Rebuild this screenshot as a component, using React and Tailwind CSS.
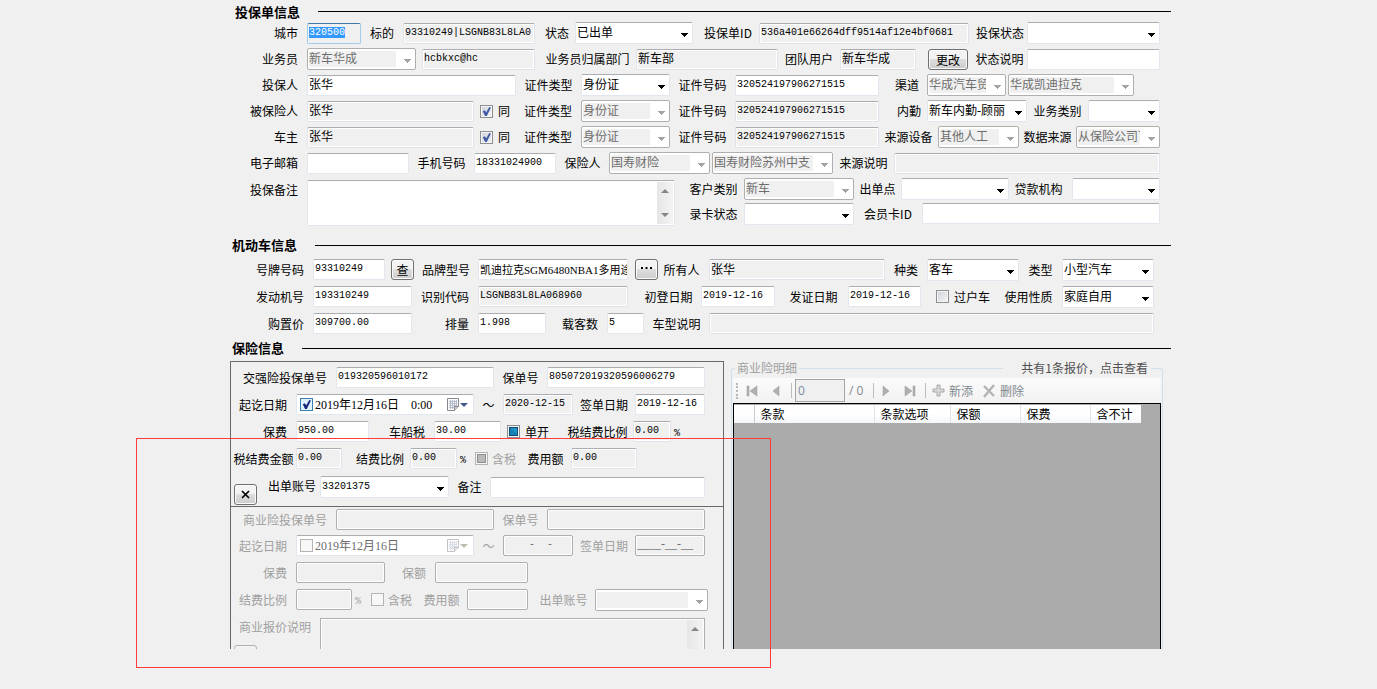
import { useEffect, useRef } from "react";

const MONO = "font-['Liberation_Mono','Noto_Sans_CJK_SC',monospace] text-[10px]";
const CJK = "font-['Liberation_Serif','Noto_Sans_CJK_SC',serif] text-[12px]";
const CJK_SMALL = "font-['Liberation_Serif','Noto_Sans_CJK_SC',serif] text-[11px]";

const BOX = {
  edit: "bg-white border-[#e2e6ee] border-t-[#abadb3] text-black",
  read: "bg-[#f0f0f0] border-[#dfe3eb] border-t-[#abadb3] text-black shadow-[inset_0_0_0_1px_#ffffff]",
  off: "bg-[#f0f0f0] border-[#afafaf] text-[#6d6d6d] shadow-[inset_0_0_0_1px_#ffffff]",
};

function Heading({ children, className = "h-[22px] pl-[2px]" }) {
  return (
    <div className={`flex items-center gap-[18px] ${className}`}>
      <h2 className="text-[13px] leading-4 font-bold whitespace-nowrap">{children}</h2>
      <div className="h-px flex-1 bg-black" />
    </div>
  );
}

function Row({ children, className = "h-[27px]" }) {
  return <div className={`flex items-center ${className}`}>{children}</div>;
}

function Label({ id, first, className = "", children }) {
  return (
    <label
      htmlFor={id}
      className={`flex-none whitespace-nowrap leading-4 ${first ? "pr-[9px] text-right" : "text-center"} ${className}`}
    >
      {children}
    </label>
  );
}

function Text({ id, value = "", kind = "edit", cjk, small, className = "", label }) {
  return (
    <input
      id={id}
      aria-label={label}
      type="text"
      defaultValue={value}
      readOnly={kind === "read"}
      disabled={kind === "off"}
      className={`block h-[21px] min-w-0 rounded-[2px] border pb-[2px] pl-px leading-4 outline-none ${BOX[kind]} ${small ? CJK_SMALL : cjk ? CJK : MONO} ${className}`}
    />
  );
}

function Arrow({ off, className = "" }) {
  return (
    <svg viewBox="0 0 8 4" className={`h-1 w-2 ${className}`} shapeRendering="crispEdges" aria-hidden="true">
      <path d="M0 0h8L4 4z" fill={off ? "#a3a3a3" : "#000000"} />
    </svg>
  );
}

function Select({ id, value = "", off, mono, className = "", label }) {
  return (
    <div
      className={`relative h-[22px] min-w-0 rounded-[2px] border bg-white py-[2px] pl-px pr-[19px] ${off ? "border-[#afafaf]" : "border-[#e2e6ee] border-t-[#abadb3]"} ${className}`}
    >
      <select
        id={id}
        aria-label={label}
        disabled={off}
        defaultValue={value}
        className={`block h-4 w-full appearance-none overflow-hidden text-clip leading-[14px] opacity-100 outline-none ${off ? "bg-[#f0f0f0] text-[#6d6d6d]" : "bg-white text-black"} ${mono ? MONO : CJK}`}
      >
        <option value={value}>{value}</option>
      </select>
      <Arrow off={off} className="pointer-events-none absolute right-1 top-[10px]" />
    </div>
  );
}

function Check({ id, state, off, label, className = "" }) {
  return (
    <span className={`relative block size-[13px] flex-none ${className}`}>
      <input
        id={id}
        type="checkbox"
        aria-label={label}
        disabled={off}
        defaultChecked={state === "on" || state === "blue"}
        className={`block size-[13px] appearance-none border ${state === "blue" ? "border-[#3c7fb1] bg-[#dff1fb]" : off ? "border-[#b4b4b4] bg-[#f7f7f7]" : "border-[#8e8f8f] bg-linear-to-br from-[#cdd1d8] to-[#f6f6f6] shadow-[inset_0_0_0_1px_#f4f4f4]"}`}
      />
      <svg viewBox="0 0 13 13" className="pointer-events-none absolute inset-0 size-[13px]" aria-hidden="true">
        {(state === "on" || state === "blue") && (
          <path d="M2.800 6.200 5 5.300 6.100 7.400 9.300 2 10.900 2.500 6.800 11H5.100z" fill={state === "blue" ? "#14227c" : "#3f5aa5"} />
        )}
        {state === "mixed" && (
          <>
            <rect x="2" y="2" width="9" height="9" fill="#0c4a78" />
            <path d="M3 3h7v7z" fill="#1f93c4" />
            <path d="M3 3v7h7z" fill="#1682b4" />
          </>
        )}
        {state === "grey" && (
          <>
            <rect x="2" y="2" width="9" height="9" fill="#8f8f8f" />
            <rect x="3" y="3" width="7" height="7" fill="#b9b9b9" />
          </>
        )}
      </svg>
    </span>
  );
}

function Button({ children, label, className = "" }) {
  return (
    <button
      type="button"
      aria-label={label}
      className={`h-[21px] flex-none rounded-[3px] border border-[#707070] bg-linear-to-b from-[#f3f3f3] from-45% via-[#dddddd] via-50% to-[#cdcdcd] text-center leading-[17px] shadow-[inset_0_0_0_1px_#fbfbfb] ${className}`}
    >
      {children}
    </button>
  );
}

function DateBox({ id, value, checked, off, label }) {
  return (
    <div
      className={`flex h-[21px] w-[178px] flex-none items-center rounded-[2px] border border-[#e2e6ee] border-t-[#abadb3] bg-white pl-[3px] pr-[5px] ${off ? "text-[#6d6d6d]" : "text-black"}`}
    >
      <Check id={`${id}-on`} state={checked ? "blue" : "none"} off={off} label={`${label}启用`} />
      <input
        id={id}
        type="text"
        disabled={off}
        defaultValue={value}
        className={`ml-[2px] h-[17px] min-w-0 flex-1 whitespace-pre bg-transparent outline-none ${CJK}`}
      />
      <svg viewBox="0 0 12 13" className={`h-[13px] w-3 ${off ? "opacity-50" : ""}`} aria-hidden="true">
        <path d="M.5.5h11v8l-4 4h-7z" fill="#fafafa" stroke="#8b8791" />
        <path d="M2 3.5h8M2 5.5h8M2 7.5h8M2 9.5h5M3.5 2v9M5.5 2v9M7.5 2v7M9.5 2v6" stroke="#a9b3c6" strokeWidth=".8" />
        <path d="M11.5 8.5h-4v4" fill="#d5d0cc" stroke="#8b8791" />
      </svg>
      <svg viewBox="0 0 8 4" className="ml-px h-1 w-2" aria-hidden="true">
        <path d="M0 0h8L4 4z" fill={off ? "#b9bcae" : "#43598c"} />
      </svg>
    </div>
  );
}

function ScrollBar({ className = "" }) {
  return (
    <div className={`flex w-4 flex-none flex-col items-center justify-between bg-linear-to-r from-[#e6e6e6] to-[#f3f3f3] py-[7px] ${className}`}>
      <svg viewBox="0 0 8 4" className="h-1 w-2" aria-hidden="true">
        <path d="M0 4h8L4 0z" fill="#858585" />
      </svg>
      <svg viewBox="0 0 8 4" className="h-1 w-2" aria-hidden="true">
        <path d="M0 0h8L4 4z" fill="#858585" />
      </svg>
    </div>
  );
}

function CityInput() {
  const ref = useRef(null);
  useEffect(() => {
    ref.current.focus();
    ref.current.select();
  }, []);
  return (
    <input
      id="city"
      ref={ref}
      type="text"
      defaultValue="320500"
      className={`block h-[21px] w-[54px] rounded-[2px] border border-[#a5cbe6] border-t-[#3d7bad] bg-[#f0f0f0] pb-[2px] pl-px outline-none selection:bg-[#3399ff] selection:text-white ${MONO}`}
    />
  );
}

function PolicySection() {
  return (
    <section>
      <Heading className="h-5 pl-[5px] pt-[3px]">投保单信息</Heading>
      <div className="pr-[11px]">
        <Row className="h-[26px]">
          <Label id="city" first className="w-[77px]">城市</Label>
          <CityInput />
          <Label id="target" className="w-[42px]">标的</Label>
          <Text id="target" kind="read" value="93310249|LSGNB83L8LA0" className="w-[132px]" />
          <Label id="state" className="w-10 pl-1">状态</Label>
          <Select id="state" value="已出单" className="w-[118px]" />
          <Label id="pid" className="w-[66px] pl-1">投保单ID</Label>
          <Text id="pid" kind="read" value="536a401e66264dff9514af12e4bf0681" className="w-[210px]" />
          <Label id="pstate" className="w-[58px] pl-1">投保状态</Label>
          <Select id="pstate" className="flex-1" />
        </Row>
        <Row className="h-[26px]">
          <Label id="agent" first className="w-[77px]">业务员</Label>
          <Select id="agent" value="新车华成" off className="mr-[6px] w-[109px]" />
          <Text label="业务员账号" kind="read" value="hcbkxc@hc" className="w-[113px]" />
          <Label id="dept" className="w-[101px] pl-1">业务员归属部门</Label>
          <Text id="dept" kind="read" cjk value="新车部" className="w-[142px]" />
          <Label id="team" className="w-[62px]">团队用户</Label>
          <Text id="team" kind="read" cjk value="新车华成" className="w-[76px]" />
          <Button className="ml-3 w-10">更改</Button>
          <Label id="snote" className="w-[59px] pl-1">状态说明</Label>
          <Text id="snote" className="flex-1" />
        </Row>
        <Row className="h-[26px]">
          <Label id="applicant" first className="w-[77px]">投保人</Label>
          <Text id="applicant" cjk value="张华" className="w-[209px]" />
          <Label id="ct1" className="w-[65px]">证件类型</Label>
          <Select id="ct1" value="身份证" className="w-[89px]" />
          <Label id="cn1" className="w-[65px]">证件号码</Label>
          <Text id="cn1" value="320524197906271515" className="w-[144px]" />
          <Label id="channel" className="w-12 pl-2">渠道</Label>
          <Select id="channel" value="华成汽车贸易" off className="mr-[2px] w-[79px]" />
          <Select label="渠道明细" value="华成凯迪拉克" off className="w-[126px]" />
        </Row>
        <Row className="h-[26px]">
          <Label id="insured" first className="w-[77px]">被保险人</Label>
          <Text id="insured" kind="read" cjk value="张华" className="w-[167px]" />
          <Check id="same1" state="on" className="ml-[6px]" />
          <Label id="same1" className="w-[22px]">同</Label>
          <Label id="ct2" className="w-[66px]">证件类型</Label>
          <Select id="ct2" value="身份证" off className="w-[89px]" />
          <Label id="cn2" className="w-[65px]">证件号码</Label>
          <Text id="cn2" kind="read" value="320524197906271515" className="w-[144px]" />
          <Label id="clerk" className="w-12 pl-3">内勤</Label>
          <Select id="clerk" value="新车内勤-顾丽" className="w-[100px]" />
          <Label id="biz" className="w-[61px]">业务类别</Label>
          <Select id="biz" className="flex-1" />
        </Row>
        <Row className="h-[26px]">
          <Label id="owner" first className="w-[77px]">车主</Label>
          <Text id="owner" kind="read" cjk value="张华" className="w-[167px]" />
          <Check id="same2" state="on" className="ml-[6px]" />
          <Label id="same2" className="w-[22px]">同</Label>
          <Label id="ct3" className="w-[66px]">证件类型</Label>
          <Select id="ct3" value="身份证" off className="w-[89px]" />
          <Label id="cn3" className="w-[65px]">证件号码</Label>
          <Text id="cn3" kind="read" value="320524197906271515" className="w-[144px]" />
          <Label id="device" className="w-[59px]">来源设备</Label>
          <Select id="device" value="其他人工" off className="w-[81px]" />
          <Label id="data" className="w-[57px]">数据来源</Label>
          <Select id="data" value="从保险公司下载" off className="flex-1" />
        </Row>
        <Row className="h-[26px]">
          <Label id="mail" first className="w-[77px]">电子邮箱</Label>
          <Text id="mail" className="w-[102px]" />
          <Label id="phone" className="w-[65px]">手机号码</Label>
          <Text id="phone" value="18331024900" className="w-[82px]" />
          <Label id="insurer" className="w-[53px]">保险人</Label>
          <Select id="insurer" value="国寿财险" off className="mr-[2px] w-[101px]" />
          <Select label="保险人分支" value="国寿财险苏州中支" off className="w-[121px]" />
          <Label id="srcnote" className="w-[61px]">来源说明</Label>
          <Text id="srcnote" kind="read" className="flex-1" />
        </Row>
        <div className="flex">
          <Label id="memo" first className="w-[77px] pt-[6px]">投保备注</Label>
          <div className="mt-1 flex h-[46px] w-[368px] rounded-[2px] border border-[#e2e6ee] border-t-[#abadb3] bg-white p-px">
            <textarea id="memo" className={`min-w-0 flex-1 resize-none overflow-hidden outline-none ${CJK}`} />
            <ScrollBar />
          </div>
          <div className="min-w-0 flex-1">
            <Row className="h-[25px]">
              <Label id="ctype" className="w-[69px] pl-2">客户类别</Label>
              <Select id="ctype" value="新车" off className="w-[110px]" />
              <Label id="point" className="w-[47px]">出单点</Label>
              <Select id="point" className="w-[108px]" />
              <Label id="loan" className="w-[63px] pr-1">贷款机构</Label>
              <Select id="loan" className="flex-1" />
            </Row>
            <Row className="h-[25px]">
              <Label id="card" className="w-[69px] pl-2">录卡状态</Label>
              <Select id="card" className="w-[110px]" />
              <Label id="member" className="w-[68px]">会员卡ID</Label>
              <Text id="member" className="flex-1" />
            </Row>
          </div>
        </div>
      </div>
    </section>
  );
}

function VehicleSection() {
  return (
    <section className="mt-2">
      <Heading>机动车信息</Heading>
      <div className="pr-[17px]">
        <Row>
          <Label id="plate" first className="w-[83px]">号牌号码</Label>
          <Text id="plate" value="93310249" className="w-[72px]" />
          <Button className="ml-[6px] w-[23px]">查</Button>
          <Label id="model" className="w-16">品牌型号</Label>
          <Text id="model" small value="凯迪拉克SGM6480NBA1多用途" className="mr-[7px] w-[150px]" />
          <Button label="选择" className="w-[23px]">
            <svg viewBox="0 0 11 2" className="mx-auto mb-1 h-[2px] w-[11px]" aria-hidden="true">
              <path d="M0 0h2v2H0zM4.500 0h2v2h-2zM9 0h2v2H9z" fill="#000000" />
            </svg>
          </Button>
          <Label id="holder" className="w-[51px] pr-1">所有人</Label>
          <Text id="holder" kind="read" cjk value="张华" className="w-[176px]" />
          <Label id="kind" className="w-[42px]">种类</Label>
          <Select id="kind" value="客车" className="w-[92px]" />
          <Label id="vtype" className="w-[43px]">类型</Label>
          <Select id="vtype" value="小型汽车" className="flex-1" />
        </Row>
        <Row>
          <Label id="engine" first className="w-[83px]">发动机号</Label>
          <Text id="engine" value="193310249" className="w-[99px]" />
          <Label id="vin" className="w-[66px]">识别代码</Label>
          <Text id="vin" kind="read" value="LSGNB83L8LA068960" className="w-[150px]" />
          <Label id="regdate" className="w-[73px] pl-2">初登日期</Label>
          <Text id="regdate" value="2019-12-16" className="w-[74px]" />
          <Label id="issue" className="w-[73px] pl-1">发证日期</Label>
          <Text id="issue" value="2019-12-16" className="w-[73px]" />
          <Check id="transfer" className="ml-[15px]" />
          <Label id="transfer" className="w-[46px]">过户车</Label>
          <Label id="usage" className="w-[67px]">使用性质</Label>
          <Select id="usage" value="家庭自用" className="flex-1" />
        </Row>
        <Row>
          <Label id="price" first className="w-[83px]">购置价</Label>
          <Text id="price" value="309700.00" className="w-[99px]" />
          <Label id="volume" first className="w-[66px]">排量</Label>
          <Text id="volume" value="1.998" className="w-[68px]" />
          <Label id="seats" first className="w-[61px]">载客数</Label>
          <Text id="seats" value="5" className="w-[37px]" />
          <Label id="vnote" className="w-[65px]">车型说明</Label>
          <Text id="vnote" kind="read" className="flex-1" />
        </Row>
      </div>
    </section>
  );
}

function CompulsoryPanel() {
  return (
    <div className="h-[144px] pt-[2px]">
      <Row>
        <Label id="jq" first className="w-[105px]">交强险投保单号</Label>
        <Text id="jq" value="019320596010172" className="w-[158px]" />
        <Label id="jqno" className="w-[53px]">保单号</Label>
        <Text id="jqno" value="805072019320596006279" className="w-[158px]" />
      </Row>
      <Row>
        <Label id="jqstart" first className="w-[65px]">起讫日期</Label>
        <DateBox id="jqstart" label="交强险起期" checked value={"2019年12月16日\u00a0\u00a0\u00a0\u00a00:00"} />
        <Label id="jqend" className="w-[29px]">～</Label>
        <Text id="jqend" kind="read" value="2020-12-15" className="w-[70px]" />
        <Label id="jqsign" className="w-[62px]">签单日期</Label>
        <Text id="jqsign" value="2019-12-16" className="w-[70px]" />
      </Row>
      <Row>
        <Label id="jqfee" first className="w-[65px]">保费</Label>
        <Text id="jqfee" value="950.00" className="w-[73px]" />
        <Label id="tax" first className="w-[65px]">车船税</Label>
        <Text id="tax" value="30.00" className="w-[67px]" />
        <Check id="single" state="mixed" className="ml-[6px]" />
        <Label id="single" className="w-[34px]">单开</Label>
        <Label id="taxrate" className="w-[79px] pl-2">税结费比例</Label>
        <Text id="taxrate" kind="read" value="0.00" className="w-[38px]" />
        <span className={`pl-[3px] pt-1 ${MONO}`}>%</span>
      </Row>
      <Row>
        <Label id="taxamt" className="w-[65px]">税结费金额</Label>
        <Text id="taxamt" kind="read" value="0.00" className="w-[46px]" />
        <Label id="rate" className="w-[68px] pl-2">结费比例</Label>
        <Text id="rate" kind="read" value="0.00" className="w-[47px]" />
        <span className={`pl-[3px] pt-1 ${MONO}`}>%</span>
        <Check id="incl" state="grey" off className="ml-[9px]" />
        <Label id="incl" className="w-8 text-[#a0a0a0]">含税</Label>
        <Label id="cost" className="w-[51px]">费用额</Label>
        <Text id="cost" kind="read" value="0.00" className="w-[66px]" />
      </Row>
      <div className="flex h-[34px] items-start pt-1">
        <Button label="清除交强险" className="ml-[3px] mr-[3px] mt-2 w-[23px]">
          <svg viewBox="0 0 9 9" className="mx-auto size-[9px]" aria-hidden="true">
            <path d="M1 1l7 7M8 1 1 8" stroke="#000000" strokeWidth="1.7" />
          </svg>
        </Button>
        <Label id="acct" className="w-[60px] pl-1 pt-[2px]">出单账号</Label>
        <Select id="acct" mono value="33201375" className="w-[129px]" />
        <Label id="jqmemo" className="w-[41px] pt-[3px]">备注</Label>
        <Text id="jqmemo" className="mt-px w-[215px]" />
      </div>
    </div>
  );
}

function CommercialPanel() {
  return (
    <div className="border-t border-[#696969] text-[#a0a0a0]">
      <Row className="h-[25px]">
        <Label id="sy" first className="w-[105px]">商业险投保单号</Label>
        <Text id="sy" kind="off" className="w-[158px]" />
        <Label id="syno" className="w-[53px]">保单号</Label>
        <Text id="syno" kind="off" className="w-[158px]" />
      </Row>
      <Row>
        <Label id="systart" first className="w-[65px]">起讫日期</Label>
        <DateBox id="systart" label="商业险起期" off value="2019年12月16日" />
        <Label id="syend" className="w-[29px]">～</Label>
        <Text id="syend" kind="off" value={"\u00a0\u00a0\u00a0\u00a0-\u00a0\u00a0-"} className="w-[70px]" />
        <Label id="sysign" className="w-[62px]">签单日期</Label>
        <Text id="sysign" kind="off" cjk value="____-__-__" className="w-[70px]" />
      </Row>
      <Row>
        <Label id="syfee" first className="w-[65px]">保费</Label>
        <Text id="syfee" kind="off" className="w-[89px]" />
        <Label id="syamt" first className="w-[50px]">保额</Label>
        <Text id="syamt" kind="off" className="w-[93px]" />
      </Row>
      <Row>
        <Label id="syrate" first className="w-[65px]">结费比例</Label>
        <Text id="syrate" kind="off" className="w-14" />
        <span className={`pl-[3px] pt-1 ${MONO}`}>%</span>
        <Check id="syincl" off className="ml-[10px]" />
        <Label id="syincl" className="w-8">含税</Label>
        <Label id="sycost" className="w-[51px]">费用额</Label>
        <Text id="sycost" kind="off" className="w-[61px]" />
        <Label id="syacct" className="w-[67px] pl-1">出单账号</Label>
        <Select id="syacct" off className="w-[113px]" />
      </Row>
      <div className="flex pt-[5px]">
        <div className="w-[89px] flex-none">
          <Label id="synote" className="block pb-[10px] pr-[9px] pt-px text-right">商业报价说明</Label>
          <Button label="清除商业险" className="ml-[3px] w-[23px] opacity-50" />
        </div>
        <div className="flex h-[60px] w-[385px] border border-[#afafaf] bg-[#f0f0f0] p-px shadow-[inset_0_0_0_1px_#ffffff]">
          <textarea id="synote" disabled className={`min-w-0 flex-1 resize-none overflow-hidden ${CJK}`} />
          <ScrollBar />
        </div>
      </div>
    </div>
  );
}

function ToolButton({ label, d, className = "" }) {
  return (
    <button type="button" aria-label={label} className={className}>
      <svg viewBox="0 0 12 12" className="size-3" aria-hidden="true">
        <path d={d} fill="#b0b0b0" stroke="#9a9a9a" strokeWidth=".5" />
      </svg>
    </button>
  );
}

function DetailPanel() {
  return (
    <div className="flex min-w-0 flex-1 flex-col">
      <div className="flex h-[19px] items-start">
        <div className="mt-[9px] h-[10px] w-1 flex-none rounded-tl-[3px] border-l border-t border-[#d3dfe9]" />
        <span className="px-[2px] leading-[18px] whitespace-nowrap text-[#a0a0a0]">商业险明细</span>
        <div className="mt-[9px] h-px flex-1 bg-[#d3dfe9]" />
        <a href="#quotes" className="pl-[18px] pr-[3px] leading-[18px] whitespace-nowrap text-[#505050]">共有1条报价，点击查看</a>
        <div className="mt-[9px] h-[10px] w-3 flex-none rounded-tr-[3px] border-r border-t border-[#d3dfe9]" />
      </div>
      <div className="flex min-h-0 flex-1 flex-col border-x border-[#d3dfe9] px-px">
        <div className="flex h-[25px] flex-none items-center bg-linear-to-b from-[#fbfbfb] to-[#f2f2f2] pl-[3px] text-[#808890]">
          <div className="h-4 w-[2px] border-l-2 border-dotted border-[#b8b8b8]" />
          <ToolButton label="首条" className="ml-2" d="M1 1h2v10H1zM11 1v10L4 6z" />
          <ToolButton label="上一条" className="ml-3" d="M9 1v10L3 6z" />
          <div className="ml-[9px] mr-[3px] h-[15px] w-px bg-[#bdbdbd]" />
          <input
            aria-label="当前位置"
            defaultValue="0"
            disabled
            className="h-[23px] w-[50px] border border-[#a5a5a5] bg-[#f0f0f0] pl-[2px] font-['Open_Sans',sans-serif] text-[12px] text-[#7d8ba0]"
          />
          <span className="ml-1 w-[22px] font-['Open_Sans',sans-serif]">/ 0</span>
          <div className="ml-[2px] h-[15px] w-px bg-[#bdbdbd]" />
          <ToolButton label="下一条" className="ml-[6px]" d="M3 1v10l6-5z" />
          <ToolButton label="末条" className="ml-3" d="M9 1h2v10H9zM1 1v10l7-5z" />
          <div className="ml-[9px] h-[15px] w-px bg-[#bdbdbd]" />
          <button type="button" className="ml-[6px] flex items-center gap-1 leading-4">
            <svg viewBox="0 0 13 13" className="size-[13px]" aria-hidden="true">
              <path d="M5 1h3v4h4v3H8v4H5V8H1V5h4z" fill="#d8d8d8" stroke="#a8a8a8" />
            </svg>
            新添
          </button>
          <button type="button" className="ml-[9px] flex items-center gap-1 leading-4">
            <svg viewBox="0 0 14 14" className="size-[14px]" aria-hidden="true">
              <path d="M2 2l10 10M12 1 2 13" stroke="#b4b4b4" strokeWidth="2.400" fill="none" />
            </svg>
            删除
          </button>
        </div>
        <div className="min-h-0 flex-1 border-x border-t border-black bg-[#ababab] pt-px">
          <table className="w-[407px] table-fixed border-collapse">
            <thead>
              <tr className="h-[18px] bg-linear-to-b from-white from-50% to-[#f3f5f8] text-left leading-4">
                <th className="w-5 border-r border-[#c9ccd0]" aria-label="行" />
                <th className="w-[120px] border-r border-[#e0e3e8] pl-[6px] font-normal">条款</th>
                <th className="w-[76px] border-r border-[#e0e3e8] pl-[6px] font-normal">条款选项</th>
                <th className="w-[70px] border-r border-[#e0e3e8] pl-[6px] font-normal">保额</th>
                <th className="w-[70px] border-r border-[#e0e3e8] pl-[6px] font-normal">保费</th>
                <th className="pl-[6px] font-normal">含不计</th>
              </tr>
            </thead>
          </table>
        </div>
      </div>
    </div>
  );
}

export default function App() {
  return (
    <main className="min-h-screen overflow-x-clip bg-[#f0f0f0] font-['Noto_Sans_CJK_SC',sans-serif] text-[12px] text-black">
      <div className="relative mx-auto w-full max-w-[965px] pl-6">
        <PolicySection />
        <VehicleSection />
        <section>
          <Heading>保险信息</Heading>
          <div className="flex h-[290px] gap-[7px] overflow-hidden pr-2">
            <div className="mt-[2px] h-[330px] w-[494px] flex-none border-x border-t border-[#696969]">
              <CompulsoryPanel />
              <CommercialPanel />
            </div>
            <DetailPanel />
          </div>
        </section>
        <div className="pointer-events-none absolute -left-[70px] top-[438px] h-[230px] w-[635px] border border-[#ff3b3b]" />
      </div>
    </main>
  );
}
